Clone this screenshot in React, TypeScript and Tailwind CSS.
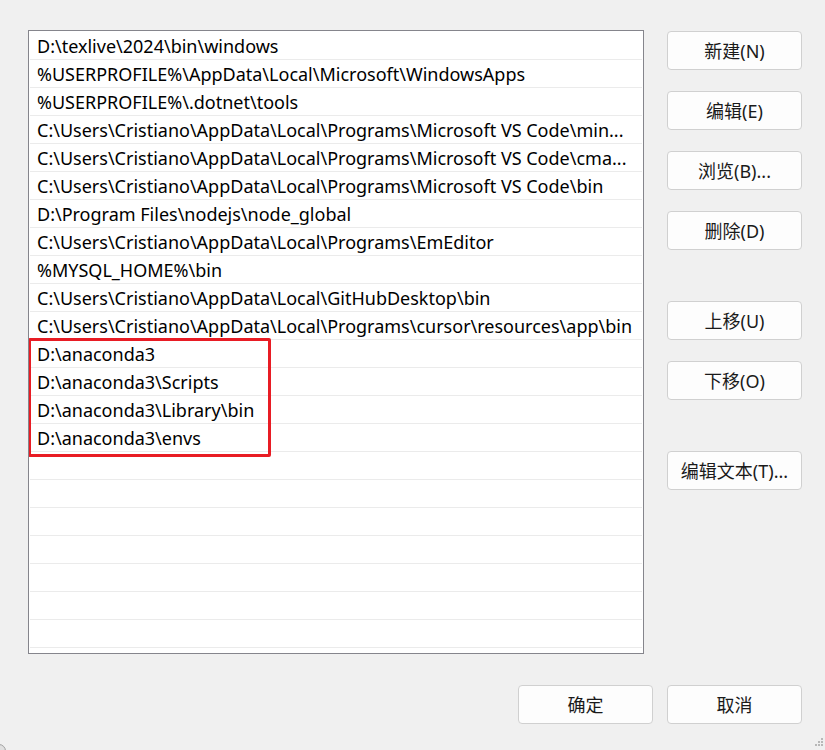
const paths = [
  "D:\\texlive\\2024\\bin\\windows",
  "%USERPROFILE%\\AppData\\Local\\Microsoft\\WindowsApps",
  "%USERPROFILE%\\.dotnet\\tools",
  "C:\\Users\\Cristiano\\AppData\\Local\\Programs\\Microsoft VS Code\\min...",
  "C:\\Users\\Cristiano\\AppData\\Local\\Programs\\Microsoft VS Code\\cma...",
  "C:\\Users\\Cristiano\\AppData\\Local\\Programs\\Microsoft VS Code\\bin",
  "D:\\Program Files\\nodejs\\node_global",
  "C:\\Users\\Cristiano\\AppData\\Local\\Programs\\EmEditor",
  "%MYSQL_HOME%\\bin",
  "C:\\Users\\Cristiano\\AppData\\Local\\GitHubDesktop\\bin",
  "C:\\Users\\Cristiano\\AppData\\Local\\Programs\\cursor\\resources\\app\\bin",
  "D:\\anaconda3",
  "D:\\anaconda3\\Scripts",
  "D:\\anaconda3\\Library\\bin",
  "D:\\anaconda3\\envs",
];

const rows = [...paths, ...Array(7).fill("")];

function Btn({ children, className = "" }: { children: React.ReactNode; className?: string }) {
  return (
    <button className={`flex h-[39px] w-[135px] items-center justify-center rounded-[4px] border border-[#d0d0d0] bg-[#fdfdfd] pt-[1px] text-[18px] text-[#1a1a1a] ${className}`}>
      {children}
    </button>
  );
}

export default function App() {
  return (
    <div
      className="relative h-[750px] w-[825px] overflow-hidden bg-[#f0f0f0] text-black"
      style={{ fontFamily: '"Noto Sans", "Noto Sans CJK SC", sans-serif' }}
    >
      <div className="flex pl-[28px] pt-[30px]">
        <div className="relative h-[624px] w-[616px] overflow-hidden border border-[#85858c] bg-white pt-[1px]">
          {rows.map((p, i) => (
            <div key={i} className="mx-[1px] flex h-[28px] items-center border-b border-[#ebebeb] pl-[7px] pt-[2px] text-[18px] whitespace-nowrap">
              {p}
            </div>
          ))}
          <div className="absolute left-[-1px] top-[307px] h-[119px] w-[243px] rounded-[2px] border-[3px] border-[#e81c24]" />
        </div>

        <div className="ml-[23px] flex flex-col pt-[1px]">
          <Btn>新建(N)</Btn>
          <Btn className="mt-[21px]">编辑(E)</Btn>
          <Btn className="mt-[21px]">浏览(B)...</Btn>
          <Btn className="mt-[21px]">删除(D)</Btn>
          <Btn className="mt-[51px]">上移(U)</Btn>
          <Btn className="mt-[21px]">下移(O)</Btn>
          <Btn className="mt-[51px]">编辑文本(T)...</Btn>
        </div>
      </div>

      <div className="mt-[31px] flex justify-end gap-[14px] pr-[23px]">
        <Btn>确定</Btn>
        <Btn>取消</Btn>
      </div>

      <svg className="absolute bottom-[2px] right-[2px]" width="10" height="10" viewBox="0 0 10 10">
        {[
          [8, 0], [8, 3], [5, 3], [8, 6], [5, 6], [2, 6],
        ].map(([x, y], i) => (
          <rect key={i} x={x} y={y} width="2" height="2" fill="#b8b8b8" />
        ))}
      </svg>
      <div className="absolute bottom-[-8px] left-[-8px] h-[14px] w-[14px] rounded-full border border-[#a0a0a0] bg-[#e0e0e0]" />
    </div>
  );
}
